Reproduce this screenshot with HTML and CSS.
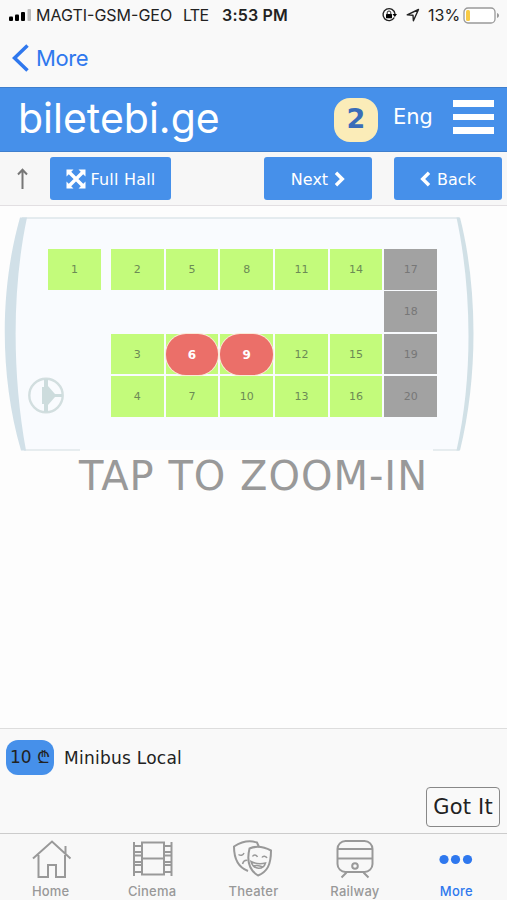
FILE: index.html
```html
<!DOCTYPE html>
<html lang="en">
<head>
    <meta charset="UTF-8">
    <meta name="viewport" content="width=device-width, initial-scale=1.0">
    <title>biletebi.ge</title>
    <link rel="stylesheet" href="styles.css">
</head>
<body>
    <div class="app">
        <!-- Status bar -->
        <div class="status-bar">
            <svg class="signal" viewBox="0 0 24 14" width="24" height="14">
                <rect x="0" y="8.5" width="4" height="4.500" rx="1"/>
                <rect x="6" y="6.5" width="4" height="6.500" rx="1"/>
                <rect x="12" y="4" width="4" height="9" rx="1"/>
                <rect x="18.500" y="1" width="3.500" height="12" rx="1" fill="#bbb"/>
            </svg>
            <span class="carrier">MAGTI-GSM-GEO</span>
            <span class="network">LTE</span>
            <span class="time">3:53 PM</span>
            <svg class="lock" viewBox="0 0 16 16" width="16" height="16">
                <path d="M13.300 10.500A6 6 0 1 1 14 7" fill="none" stroke="#222" stroke-width="1.400"/>
                <path d="M11.500 7h4.500l-2.200 3z"/>
                <rect x="5" y="7" width="6" height="4.200" rx=".5"/>
                <path d="M6.200 7.500V5.800a1.800 1.800 0 0 1 3.600 0v1.700" fill="none" stroke="#222" stroke-width="1"/>
            </svg>
            <svg class="location" viewBox="0 0 14 14" width="14" height="14">
                <path d="M1.200 6.900L12.500 1.500 7.400 12.800 7 7.200z" fill="none" stroke="#222" stroke-width="1.400" stroke-linejoin="round"/>
            </svg>
            <span class="percent">13%</span>
            <svg class="battery" viewBox="0 0 37 17" width="37" height="17">
                <rect x="1" y="1" width="31" height="15" rx="4" fill="#fff" stroke="#999" stroke-width="1.300"/>
                <rect x="3" y="3" width="4" height="11" rx="1.500" fill="#f8cb46"/>
                <path d="M34 6v5c1.300-.4 2-1.300 2-2.500S35.300 6.400 34 6z" fill="#999"/>
            </svg>
        </div>

        <!-- Back navigation -->
        <div class="nav-bar">
            <svg viewBox="0 0 18 30" width="18" height="30">
                <path d="M15.500 2.500L2.500 15l13 12.500" fill="none" stroke="#2f78ee" stroke-width="3.500"/>
            </svg>
            <span>More</span>
        </div>

        <!-- Header -->
        <header class="header">
            <div class="logo">biletebi.ge</div>
            <div class="cart-count">2</div>
            <div class="language">Eng</div>
            <div class="menu">
                <i></i>
                <i></i>
                <i></i>
            </div>
        </header>

        <!-- Toolbar -->
        <div class="toolbar">
            <svg class="up-arrow" viewBox="0 0 12 22" width="12" height="22">
                <path d="M5.500 21V2M1 6.500l4.500-4.700L10 6.500" fill="none" stroke="#777" stroke-width="2"/>
            </svg>
            <div class="button button-hall">
                <svg viewBox="0 0 20 20" width="20" height="20">
                    <path d="M3 3l14 14M17 3L3 17" stroke="#fff" stroke-width="3.400"/>
                    <path d="M.5.5h7l-7 7zM19.500.5v7l-7-7zM.5 19.500v-7l7 7zM19.500 19.500h-7l7-7z" fill="#fff"/>
                </svg>
                <span>Full Hall</span>
            </div>
            <div class="button button-next">
                <span>Next</span>
                <svg viewBox="0 0 11 16" width="11" height="16">
                    <path d="M2 1.800L8.300 8 2 14.200" fill="none" stroke="#fff" stroke-width="3.400"/>
                </svg>
            </div>
            <div class="button button-back">
                <svg viewBox="0 0 11 16" width="11" height="16">
                    <path d="M9 1.800L2.700 8 9 14.200" fill="none" stroke="#fff" stroke-width="3.400"/>
                </svg>
                <span>Back</span>
            </div>
        </div>

        <!-- Seat map -->
        <main class="hall">
            <div class="bus">
                <svg class="bus-body" viewBox="0 0 507 246" width="507" height="246">
                    <path d="M25 12H459Q486 128 459 244H25Q-8 128 25 12z" fill="#f9fbfe"/>
                    <path d="M22 12H459" stroke="#dce6ea" stroke-width="1.500"/>
                    <path d="M24 244H80M433 244H459" stroke="#dfe8ea" stroke-width="1.500"/>
                    <path d="M20 11.500h7C12 82 12 168 26 244.500h-5C-1 168 0 82 20 11.500z" fill="#d1e0e8"/>
                    <path d="M456.500 11.500h3.500C478 82 478 172 460 244.500h-3.500C473 172 472 84 456.500 11.500z" fill="#d1e0e6"/>
                    <circle cx="46" cy="189.500" r="16.700" fill="none" stroke="#d2dedf" stroke-width="2.400"/>
                    <path d="M44 173v8h-2v17h2v8h4v-7l7-8h7v-3h-7l-7-8v-7z" fill="#cddcdd"/>
                </svg>
                <div class="seats">
                    <div class="seat front">1</div>
                    <div class="seat">2</div>
                    <div class="seat">5</div>
                    <div class="seat">8</div>
                    <div class="seat">11</div>
                    <div class="seat">14</div>
                    <div class="seat taken">17</div>

                    <div class="seat taken last">18</div>

                    <div class="seat second">3</div>
                    <div class="seat selected"><span>6</span></div>
                    <div class="seat selected"><span>9</span></div>
                    <div class="seat">12</div>
                    <div class="seat">15</div>
                    <div class="seat taken">19</div>

                    <div class="seat second">4</div>
                    <div class="seat">7</div>
                    <div class="seat">10</div>
                    <div class="seat">13</div>
                    <div class="seat">16</div>
                    <div class="seat taken">20</div>
                </div>
            </div>
            <p class="zoom-hint">TAP TO ZOOM-IN</p>
        </main>

        <!-- Prices -->
        <section class="legend">
            <div class="legend-row">
                <span class="price">10 ₾</span>
                <span class="legend-name">Minibus Local</span>
            </div>
            <div class="got-it">Got It</div>
        </section>

        <!-- Tab bar -->
        <nav class="tabs">
            <div class="tab">
                <svg viewBox="0 0 44 42" width="44" height="42">
                    <path d="M4 21.500L23 4.500l18.500 17M9.500 18v22h9.500V28h8v12h9V18M36.500 9v8"/>
                </svg>
                <span>Home</span>
            </div>
            <div class="tab">
                <svg viewBox="0 0 44 42" width="44" height="42">
                    <path d="M4 5v34M41.500 5v34M12 5.500h22v32H12zM12 21.500h22M4 9h8M4 15h8M4 18.500h8M4 25h8M4 28h8M4 35h8M34 9h7.500M34 15h7.500M34 18.500h7.500M34 25h7.500M34 28h7.500M34 35h7.500"/>
                </svg>
                <span>Cinema</span>
            </div>
            <div class="tab">
                <svg viewBox="0 0 44 42" width="44" height="42">
                    <path d="M17 34C9 31 3 25 3 9.500 10 5 19 3 26 5.500l2 4.500"/>
                    <path d="M18.500 11.500c7-3 14-2 21.500 2C40 28 36 35 27 38.500 18 33 15.500 24 18.500 11.500z"/>
                    <path class="thin" d="M7.500 17.500c2 1.500 4.500 1 5.500-1.500M11.500 27c1-3 3-4 5-3.500M21.500 19.500c1-2 4-2 5 .5M31 20.500c1-2 4-1.500 5 .5"/>
                    <path class="thin" d="M20 24.500c5 2.500 9 3 14.500 1.500-2 7-12 7.500-14.500-1.500zM22 29c3-1 7-.5 10 1"/>
                </svg>
                <span>Theater</span>
            </div>
            <div class="tab">
                <svg viewBox="0 0 44 42" width="44" height="42">
                    <rect x="4.500" y="4" width="35" height="31" rx="8"/>
                    <path d="M5 12h34M5 21.500h34M13.500 35.500l-5 5M30.500 35.500l5 5"/>
                    <circle cx="22" cy="29" r="2.800"/>
                </svg>
                <span>Railway</span>
            </div>
            <div class="tab active">
                <svg viewBox="0 0 44 42" width="44" height="42">
                    <circle cx="10" cy="22.500" r="4.600"/>
                    <circle cx="21.500" cy="22.500" r="4.600"/>
                    <circle cx="33.500" cy="22.500" r="4.600"/>
                </svg>
                <span>More</span>
            </div>
        </nav>
    </div>
</body>
</html>
```
FILE: styles.css
```css
/* Reset and base styles */
* {
    margin: 0;
    padding: 0;
    box-sizing: border-box;
}

body {
    font-family: "DejaVu Sans", sans-serif;
    background: #fdfdfd;
    color: #222;
}

svg {
    display: block;
    flex-shrink: 0;
}

.app {
    display: flex;
    flex-direction: column;
    width: 507px;
    height: 900px;
    overflow: hidden;
    white-space: nowrap;
}

/* Status bar */
.status-bar {
    display: flex;
    align-items: center;
    height: 30px;
    padding-left: 9px;
    background: #f9f9f9;
    font-family: Inter, sans-serif;
    font-size: 16px;
}

.carrier {
    width: 149px;
    padding-left: 3px;
}

.network {
    width: 40px;
    padding-left: 1px;
    letter-spacing: -0.7px;
}

.time {
    width: 159px;
    font-weight: 600;
    letter-spacing: 0.2px;
}

.location {
    margin: 0 8px 0 9px;
}

.percent {
    width: 35px;
}

/* Back navigation */
.nav-bar {
    display: flex;
    align-items: center;
    gap: 6px;
    height: 57px;
    padding: 0 0 2px 12px;
    background: #f9f9f9;
    color: #2f78ee;
    font-family: Inter, sans-serif;
    font-size: 22px;
    letter-spacing: -0.4px;
}

/* Header */
.header {
    display: flex;
    align-items: center;
    height: 65px;
    padding-left: 18px;
    background: #4690ea;
    border-top: 1px solid #3f7fcd;
    border-bottom: 1px solid #3f7fcd;
    color: #fff;
}

.logo {
    width: 316px;
    padding-bottom: 3px;
    font-family: Inter, sans-serif;
    font-size: 41px;
    line-height: 50px;
}

.cart-count {
    width: 44px;
    height: 44px;
    border-radius: 16px;
    background: #fbecb8;
    color: #3a6db8;
    font-size: 27px;
    font-weight: bold;
    line-height: 42px;
    text-align: center;
}

.language {
    width: 75px;
    padding: 0 0 6px 15px;
    font-size: 21px;
}

.menu {
    display: flex;
    flex-direction: column;
    gap: 7px;
    padding-bottom: 5px;
}

.menu i {
    width: 41px;
    height: 6.5px;
    background: #fff;
}

/* Toolbar */
.toolbar {
    display: flex;
    align-items: center;
    height: 54px;
    padding-left: 17px;
    background: #f7f7f7;
    border-bottom: 1px solid #e2dfe2;
}

.button {
    display: flex;
    align-items: center;
    justify-content: center;
    height: 43px;
    border-radius: 3px;
    background: #4690ea;
    color: #fff;
    font-size: 16px;
    line-height: 22px;
}

.button span {
    padding-top: 2px;
}

.button-hall {
    width: 121px;
    gap: 5px;
    margin-left: 21px;
    letter-spacing: 0.2px;
}

.button-next {
    width: 108px;
    gap: 6px;
    margin-left: 93px;
}

.button-back {
    width: 108px;
    gap: 6px;
    margin-left: 22px;
}

/* Seat map */
.hall {
    height: 522px;
}

.bus {
    display: grid;
    height: 246px;
}

.bus-body,
.seats {
    grid-area: 1 / 1;
}

.seats {
    display: grid;
    grid-template-columns: 61px repeat(6, 52.7px);
    grid-template-rows: repeat(4, 40.6px);
    gap: 1.8px 2px;
    padding: 43px 0 0 48px;
}

.seat {
    background: #c3fb7b;
    color: #6c8a55;
    font-size: 11px;
    line-height: 41px;
    text-align: center;
}

.front {
    width: 52.9px;
}

.second {
    grid-column: 2;
}

.last {
    grid-column: 7;
}

.taken {
    background: #a2a2a2;
    color: #777;
}

.selected span {
    display: block;
    height: 41px;
    border-radius: 20px;
    background: #eb6f69;
    box-shadow: 0 0 0 1px #fbe9d8;
    color: #fff;
    font-size: 12px;
    font-weight: bold;
    line-height: 43px;
}

.zoom-hint {
    color: #999;
    font-size: 40px;
    letter-spacing: 1px;
    line-height: 49px;
    text-align: center;
}

/* Prices */
.legend {
    height: 105px;
    padding: 11px 7px 0 6px;
    background: #f9f9f9;
    border-top: 1px solid #ddd;
}

.legend-row {
    display: flex;
    align-items: center;
    gap: 10px;
    font-size: 17px;
}

.legend-name {
    letter-spacing: 0.25px;
}

.price {
    width: 48px;
    height: 35px;
    border-radius: 12px;
    background: #4690ea;
    line-height: 35px;
    text-align: center;
}

.got-it {
    width: 74px;
    height: 40px;
    margin: 12px 0 0 auto;
    border: 1.5px solid #888;
    border-radius: 4px;
    font-size: 21px;
    letter-spacing: 0.2px;
    line-height: 39px;
    text-align: center;
}

/* Tab bar */
.tabs {
    display: grid;
    grid-template-columns: repeat(5, 1fr);
    height: 67px;
    background: #f8f8f8;
    border-top: 1px solid #ccc;
}

.tab {
    display: flex;
    flex-direction: column;
    align-items: center;
    padding-top: 3px;
    color: #999;
    font-family: Inter, sans-serif;
    font-size: 13px;
    font-weight: 500;
    letter-spacing: 0.2px;
    line-height: 16px;
}

.tab svg {
    margin-bottom: 4px;
    fill: none;
    stroke: #999;
    stroke-width: 2;
}

.tab .thin {
    stroke-width: 1.5;
}

.tab.active {
    color: #2f78ee;
}

.tab.active svg {
    fill: #2f78ee;
    stroke: none;
}
```
